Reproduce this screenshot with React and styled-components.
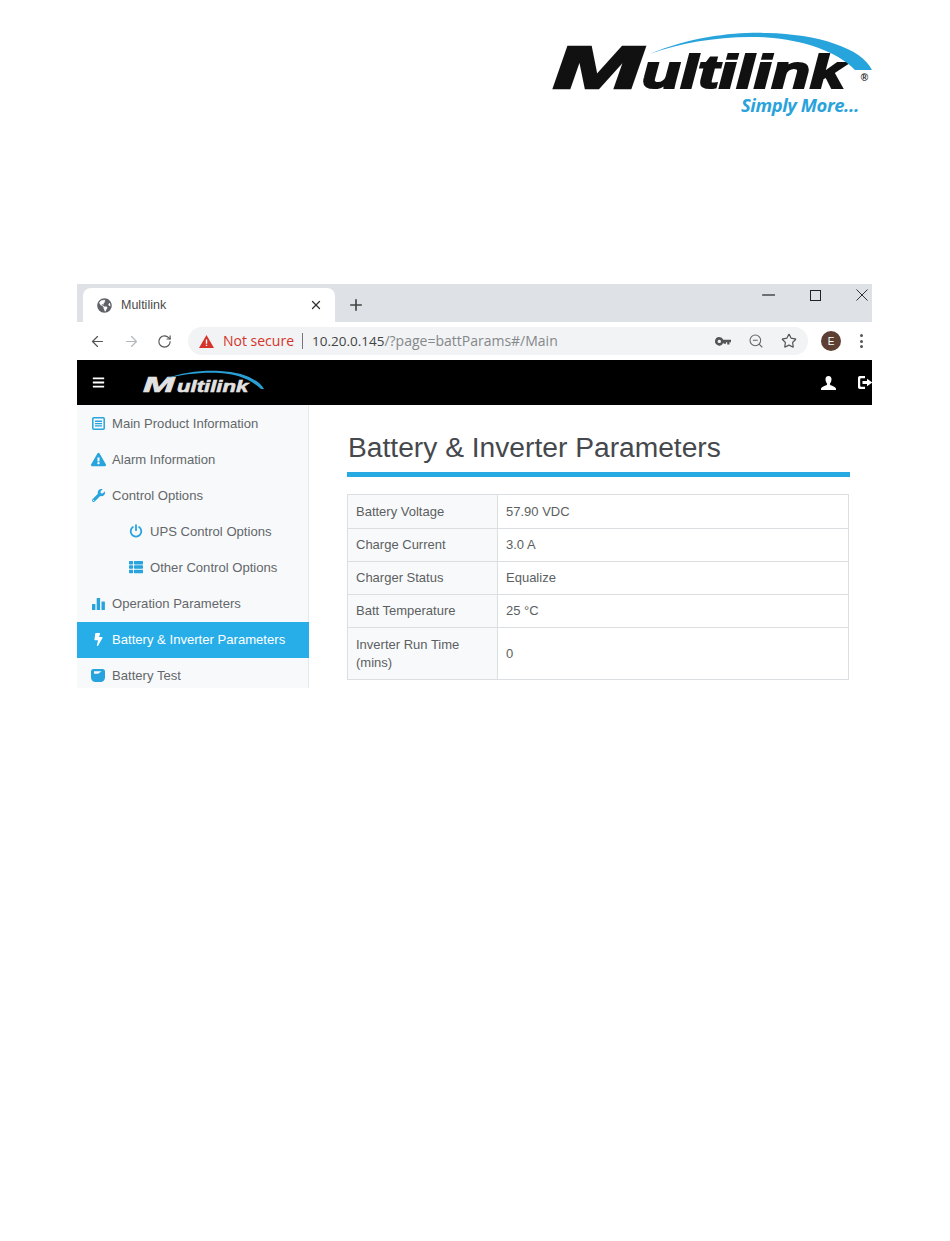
import React from 'react';
import styled, { createGlobalStyle } from 'styled-components';
import { FaExclamationTriangle, FaWrench, FaThList, FaBolt, FaGlobeAmericas, FaBars } from 'react-icons/fa';
import { ArrowLeft, ArrowRight, RotateCw, ZoomOut, Star, X, Plus } from 'lucide-react';

const Global = createGlobalStyle`
  html, body { margin: 0; padding: 0; background: #fff; }
  body { font-family: "Liberation Sans", Arial, sans-serif; color: #444; }
`;
const Page = styled.div`
  width: 950px; height: 1241px; overflow: hidden; box-sizing: border-box;
  padding: 26px 78px 0 77px; display: flex; flex-direction: column;
`;
const Letterhead = styled.header`display: flex; justify-content: flex-end; height: 258px;`;
const BigLogo = styled.div`position: relative; width: 320px; height: 92px;`;
const BigArc = styled.svg`position: absolute; left: 0; top: 0; width: 320px; height: 92px;`;
const BigWord = styled.div`position: absolute; left: 0; top: 0; width: 320px; height: 68px; color: #111; white-space: nowrap;`;
const BigM = styled.span`
  position: absolute; left: 1px; top: 17px; font: italic 700 60px/50px "Liberation Sans", sans-serif;
  -webkit-text-stroke: 2.4px #111; transform-origin: 0 0; transform: scaleX(1.78);
`;
const BigRest = styled.span`
  position: absolute; left: 90px; top: 24px; font: italic 700 47px/44px "Liberation Sans", sans-serif;
  -webkit-text-stroke: 2.2px #111; transform-origin: 0 0; transform: scaleX(1.34);
`;
const Registered = styled.span`position: absolute; right: 4px; top: 46px; font: 700 10px/12px "Liberation Sans", sans-serif; color: #222;`;
const Tagline = styled.div`
  position: absolute; left: 189px; top: 68px; white-space: nowrap; color: #2aa3dc;
  font: italic 700 18.4px/22px "Open Sans", sans-serif; letter-spacing: -0.4px;
`;
const Shot = styled.section`width: 795px; height: 404px; overflow: hidden; display: flex; flex-direction: column; flex: none;`;
const TabStrip = styled.div`height: 38px; background: #dee1e6; display: flex; align-items: flex-end; padding-left: 6px; flex: none; color: #444;`;
const Tab = styled.div`
  width: 252px; height: 34px; background: #fff; border-radius: 8px 8px 0 0; display: flex; align-items: center;
  box-sizing: border-box; padding: 0 12px 0 14px; font-size: 12.5px; color: #4a4a4a; gap: 9px;
`;
const TabTitle = styled.span`flex: 1;`;
const NewTab = styled.div`margin: 0 0 5px 12px; height: 24px; display: flex; align-items: center;`;
const WindowControls = styled.div`margin-left: auto; align-self: flex-start; display: flex; align-items: center; gap: 35px; height: 22px; padding-right: 4px;`;
const AddressBar = styled.div`height: 38px; flex: none; background: #fff; display: flex; align-items: center; padding: 0 0 0 12px; box-sizing: border-box;`;
const NavIcons = styled.div`display: flex; align-items: center; gap: 17px; width: 99px; flex: none;`;
const Omnibox = styled.div`
  width: 620px; height: 28px; background: #f1f3f4; border-radius: 14px; display: flex; align-items: center; flex: none;
  box-sizing: border-box; padding: 0 11px 0 11px; font: 14px/28px "Open Sans", sans-serif; color: #85888b;
`;
const NotSecure = styled.span`color: #d5342b; margin-left: 9px; font-size: 14px;`;
const Divider = styled.span`width: 1px; height: 16px; background: #777; margin: 0 9px 0 8px;`;
const Host = styled.span`color: #444; font-size: 13.5px;`;
const Url = styled.span`font-size: 14px; flex: 1;`;
const OmniIcons = styled.div`display: flex; align-items: center; gap: 17px;`;
const Avatar = styled.div`
  width: 20px; height: 20px; border-radius: 50%; background: #5d3f33; color: #fff; font-size: 10px;
  display: flex; align-items: center; justify-content: center; margin-left: 13px;
`;
const Kebab = styled.div`display: flex; flex-direction: column; gap: 2.5px; margin-left: 19px;`;
const Dot = styled.i`width: 3px; height: 3px; border-radius: 50%; background: #555; display: block;`;
const TopNav = styled.div`height: 45px; background: #000; display: flex; align-items: center; flex: none; color: #fff; padding-left: 15px; position: relative;`;
const NavLogo = styled.div`position: relative; width: 124px; height: 28px; margin-left: 37px;`;
const NavArc = styled.svg`position: absolute; left: 0; top: 0; width: 124px; height: 28px;`;
const NavM = styled.span`
  position: absolute; left: 1px; top: 5px; color: #e2e2e2; font: italic 700 22px/22px "Liberation Sans", sans-serif;
  -webkit-text-stroke: .7px #e2e2e2; transform-origin: 0 0; transform: scaleX(1.72);
`;
const NavRest = styled.span`
  position: absolute; left: 35px; top: 8px; color: #e2e2e2; font: italic 700 17px/20px "Liberation Sans", sans-serif;
  -webkit-text-stroke: .6px #e2e2e2; transform-origin: 0 0; transform: scaleX(1.3);
`;
const NavRight = styled.div`margin-left: auto; display: flex; align-items: center; gap: 22px; margin-right: -1px;`;
const Body = styled.div`display: flex; flex: 1; min-height: 0;`;
const Sidebar = styled.nav`width: 232px; flex: none; box-sizing: border-box; background: #f8f9fa; border-right: 1px solid #e6e8ea; display: flex; flex-direction: column;`;
const Item = styled.div`
  height: 36.1px; flex: none; display: flex; align-items: center; gap: 7px; box-sizing: border-box;
  padding-left: ${p => (p.$sub ? 52 : 14)}px; margin-right: -1px;
  font-size: 13.1px; color: ${p => (p.$active ? '#fff' : '#63676b')}; background: ${p => (p.$active ? '#27aee8' : 'transparent')};
  & svg { flex: none; color: ${p => (p.$active ? '#fff' : '#27a3dd')}; }
`;
const IconSlot = styled.span`width: 14px; height: 14px; display: flex; align-items: center; justify-content: center; flex: none;`;
const Content = styled.main`flex: 1; padding: 24px 22px 0 38px; min-width: 0;`;
const Title = styled.h1`
  margin: 0; font-weight: 400; font-size: 28.2px; line-height: 35px; color: #45484c;
  padding: 1px 0 7px 1px; border-bottom: 5px solid #27a9e1;
`;
const Table = styled.table`margin-top: 17px; width: 502px; border-collapse: collapse; font-size: 13px; color: #5c5f62;`;
const Th = styled.td`
  width: 133px; background: #f8f9fa; border: 1px solid #dcdfe2; line-height: 18px;
  padding: ${p => p.$pad}px 8px;
`;
const Td = styled.td`border: 1px solid #dcdfe2; padding: 7px 8px; line-height: 18px;`;

const Arc = ({ as: C, w, h, d, color }) => (
  <C viewBox={`0 0 ${w} ${h}`} aria-hidden="true"><path d={d} fill={color} /></C>
);

const ListAlt = () => (
  <svg width="13" height="13" viewBox="0 0 13 13"><rect x=".8" y=".8" width="11.4" height="11.4" rx="1" fill="none" stroke="currentColor" strokeWidth="1.5"/><path d="M3 3.600h7V5H3zM3 5.900h7v1.400H3zM3 8.200h7v1.400H3z" fill="currentColor"/></svg>
);
const BarsIcon = () => (
  <svg width="13" height="13" viewBox="0 0 13 13" fill="currentColor"><rect x="0" y="7" width="3.400" height="6" rx=".5"/><rect x="4.700" y="1" width="3.400" height="12" rx=".5"/><rect x="9.500" y="4.400" width="3.400" height="8.600" rx=".5"/></svg>
);
const Gauge = () => (
  <svg width="14" height="13" viewBox="0 0 14 13"><path fillRule="evenodd" fill="currentColor" d="M2.500 0h9A2.500 2.500 0 0 1 14 2.500v6A4.500 4.500 0 0 1 9.500 13h-5A4.500 4.500 0 0 1 0 8.500v-6A2.500 2.500 0 0 1 2.500 0zM3 2.200v2.600h4.200l3.400-2.600z"/></svg>
);
const Power = () => (
  <svg width="14" height="14" viewBox="0 0 14 14" fill="none" stroke="currentColor" strokeWidth="1.800" strokeLinecap="round"><path d="M7 1.200v5"/><path d="M3.900 3.100a5.300 5.300 0 1 0 6.200 0"/></svg>
);
const Person = () => (
  <svg width="15" height="14" viewBox="0 0 15 14" fill="#fff"><path d="M7.500 0C9.600 0 10.600 1.500 10.500 3.500 10.400 5.500 9.500 7 8.900 7.800 8.700 8.300 9 8.800 9.700 9.200 11.500 10 14 10.500 15 12.400V14H0v-1.600C1 10.500 3.500 10 5.300 9.200 6 8.800 6.300 8.300 6.100 7.800 5.500 7 4.600 5.500 4.500 3.500 4.400 1.500 5.400 0 7.500 0z"/></svg>
);
const Logout = () => (
  <svg width="15" height="13" viewBox="0 0 15 13" fill="#fff"><path d="M1.800 0H7v2.200H3.200a1 1 0 0 0-1 1v6.600a1 1 0 0 0 1 1H7V13H1.800A1.800 1.800 0 0 1 0 11.200V1.800A1.800 1.800 0 0 1 1.800 0z"/><path d="M9 2.800 14.500 6.500 9 10.200V8H4.500V5H9z"/></svg>
);
const Key = () => (
  <svg width="16" height="9" viewBox="0 0 16 9" fill="#555"><path fillRule="evenodd" d="M4.300 0a4.300 4.300 0 0 1 4 2.800H16v2.400h-1.500V7.500h-2.300V5.200h-1.200v1.600H8.800L8.300 5.800A4.300 4.300 0 1 1 4.300 0zm0 2.700a1.700 1.700 0 1 0 0 3.400 1.700 1.700 0 0 0 0-3.400z"/></svg>
);
const Warn = () => (
  <svg width="15" height="13" viewBox="0 0 15 13"><path d="M7.500 0 15 13H0z" fill="#d5342b"/><path d="M6.800 4.500h1.400v4.300H6.800zM6.800 9.700h1.400v1.400H6.800z" fill="#fff"/></svg>
);
const Minimize = () => <svg width="13" height="3" viewBox="0 0 13 3"><path d="M0 1h13" stroke="#222" strokeWidth="1.200"/></svg>;
const Maximize = () => <svg width="11" height="11" viewBox="0 0 11 11"><rect x=".5" y=".5" width="10" height="10" fill="none" stroke="#222"/></svg>;
const CloseWin = () => <svg width="12" height="12" viewBox="0 0 12 12"><path d="M.5.5l11 11M11.500.5l-11 11" stroke="#333" fill="none"/></svg>;

const menu = [
  { label: 'Main Product Information', icon: <ListAlt /> },
  { label: 'Alarm Information', icon: <FaExclamationTriangle size={15} /> },
  { label: 'Control Options', icon: <FaWrench size={13} /> },
  { label: 'UPS Control Options', icon: <Power />, sub: true },
  { label: 'Other Control Options', icon: <FaThList size={14} />, sub: true },
  { label: 'Operation Parameters', icon: <BarsIcon /> },
  { label: 'Battery & Inverter Parameters', icon: <FaBolt size={13} />, active: true },
  { label: 'Battery Test', icon: <Gauge /> },
];
const rows = [
  ['Battery Voltage', '57.90 VDC', 7.5],
  ['Charge Current', '3.0 A', 7],
  ['Charger Status', 'Equalize', 7],
  ['Batt Temperature', '25 °C', 7],
  ['Inverter Run Time (mins)', '0', 7.5],
];

export default function App() {
  return (
    <Page>
      <Global />
      <Letterhead>
        <BigLogo>
          <BigWord><BigM>M</BigM><BigRest>ultilink</BigRest></BigWord>
          <Arc as={BigArc} w={320} h={92} color="#27a4dc" d="M98 28C140 10 185 6 215 7C265 8 310 22 320 44L303 44C285 25 250 14 215 11.500C175 9 130 16 98 28Z" />
          <Registered>®</Registered>
          <Tagline>Simply More…</Tagline>
        </BigLogo>
      </Letterhead>
      <Shot>
        <TabStrip>
          <Tab>
            <FaGlobeAmericas size={15} color="#5f6368" />
            <TabTitle>Multilink</TabTitle>
            <X size={14} color="#333" strokeWidth={2.200} />
          </Tab>
          <NewTab><Plus size={18} color="#444" strokeWidth={2.200} /></NewTab>
          <WindowControls><Minimize /><Maximize /><CloseWin /></WindowControls>
        </TabStrip>
        <AddressBar>
          <NavIcons>
            <ArrowLeft size={17} color="#555" strokeWidth={1.700} />
            <ArrowRight size={17} color="#b5b8bb" strokeWidth={1.700} />
            <RotateCw size={15} color="#555" strokeWidth={1.800} />
          </NavIcons>
          <Omnibox>
            <Warn />
            <NotSecure>Not secure</NotSecure>
            <Divider />
            <Host>10.20.0.145</Host>
            <Url>/?page=battParams#/Main</Url>
            <OmniIcons>
              <Key />
              <ZoomOut size={16} color="#666" strokeWidth={1.600} />
              <Star size={16} color="#555" strokeWidth={1.800} />
            </OmniIcons>
          </Omnibox>
          <Avatar>E</Avatar>
          <Kebab><Dot /><Dot /><Dot /></Kebab>
        </AddressBar>
        <TopNav>
          <FaBars size={13} />
          <NavLogo>
            <NavM>M</NavM><NavRest>ultilink</NavRest>
            <Arc as={NavArc} w={124} h={28} color="#2a9fd6" d="M23 10C40 3 62 1 78 2C100 3 116 10 122 20L119 20C108 10 95 5 78 4C60 3 40 5 23 10Z" />
          </NavLogo>
          <NavRight><Person /><Logout /></NavRight>
        </TopNav>
        <Body>
          <Sidebar>
            {menu.map(m => (
              <Item key={m.label} $sub={m.sub} $active={m.active}>
                <IconSlot>{m.icon}</IconSlot>{m.label}
              </Item>
            ))}
          </Sidebar>
          <Content>
            <Title>Battery &amp; Inverter Parameters</Title>
            <Table>
              <tbody>
                {rows.map(([k, v, pad]) => <tr key={k}><Th $pad={pad}>{k}</Th><Td>{v}</Td></tr>)}
              </tbody>
            </Table>
          </Content>
        </Body>
      </Shot>
    </Page>
  );
}
